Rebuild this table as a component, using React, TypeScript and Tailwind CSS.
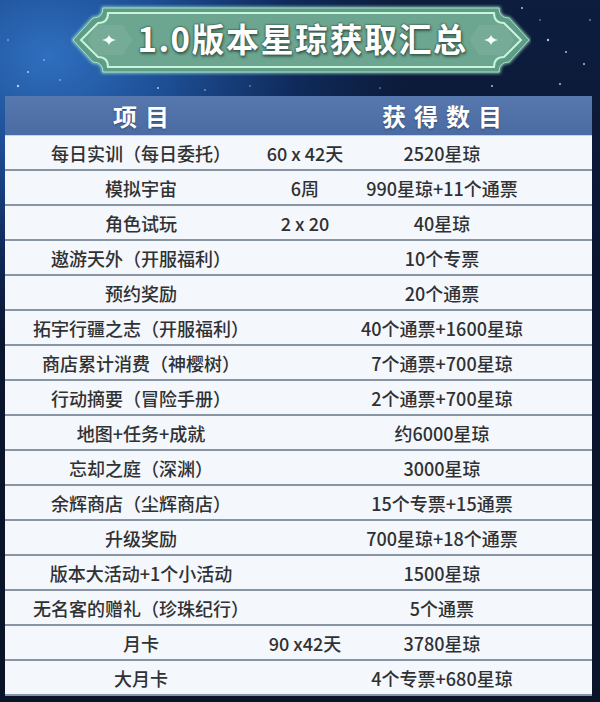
import { FC } from "react";

const rows: [string, string, string][] = [
  ["每日实训（每日委托）", "60 x 42天", "2520星琼"],
  ["模拟宇宙", "6周", "990星琼+11个通票"],
  ["角色试玩", "2 x 20", "40星琼"],
  ["遨游天外（开服福利）", "", "10个专票"],
  ["预约奖励", "", "20个通票"],
  ["拓宇行疆之志（开服福利）", "", "40个通票+1600星琼"],
  ["商店累计消费（神樱树）", "", "7个通票+700星琼"],
  ["行动摘要（冒险手册）", "", "2个通票+700星琼"],
  ["地图+任务+成就", "", "约6000星琼"],
  ["忘却之庭（深渊）", "", "3000星琼"],
  ["余辉商店（尘辉商店）", "", "15个专票+15通票"],
  ["升级奖励", "", "700星琼+18个通票"],
  ["版本大活动+1个小活动", "", "1500星琼"],
  ["无名客的赠礼（珍珠纪行）", "", "5个通票"],
  ["月卡", "90 x42天", "3780星琼"],
  ["大月卡", "", "4个专票+680星琼"],
];

const font = "font-['Noto_Sans_CJK_SC','Noto_Sans',sans-serif]";

const Sparkle: FC<{ x: number; y: number }> = ({ x, y }) => (
  <path
    transform={`translate(${x} ${y})`}
    d="M0,-5 Q1.2,-1.2 7,0 Q1.2,1.2 0,5 Q-1.2,1.2 -7,0 Q-1.2,-1.2 0,-5 Z"
    fill="#f4fff9"
  />
);

const Banner: FC = () => (
  <div className="relative h-[72px] w-[460px]">
    <svg className="absolute inset-0" width="460" height="72" viewBox="0 0 460 72">
      <defs>
        <filter id="glow" x="-10%" y="-30%" width="120%" height="160%">
          <feGaussianBlur stdDeviation="1.5" />
        </filter>
      </defs>
      <path
        d="M32,4 H428 Q428,14 438,14 L458,36 L438,58 Q428,58 428,68 H32 Q32,58 22,58 L2,36 L22,14 Q32,14 32,4 Z"
        fill="none"
        stroke="#9fe3c4"
        strokeWidth="3"
        filter="url(#glow)"
        opacity="0.8"
      />
      <path
        d="M32,4 H428 Q428,14 438,14 L458,36 L438,58 Q428,58 428,68 H32 Q32,58 22,58 L2,36 L22,14 Q32,14 32,4 Z"
        fill="#5f9c86"
        stroke="#a6e2c5"
        strokeWidth="1"
      />
      <path
        d="M37,9 H423 Q423,19 433,19 L450,36 L433,53 Q423,53 423,63 H37 Q37,53 27,53 L10,36 L27,19 Q37,19 37,9 Z"
        fill="#6ca690"
        stroke="#c9f4dc"
        strokeWidth="2"
      />
      <path d="M26,21 L52,21 L61,36 L52,51 L26,51 L17,36 Z" fill="#ffffff" opacity="0.07" />
      <path d="M408,21 L434,21 L443,36 L434,51 L408,51 L399,36 Z" fill="#ffffff" opacity="0.07" />
      <Sparkle x={38} y={36} />
      <Sparkle x={420} y={36} />
    </svg>
    <div className="relative flex h-full items-center justify-center pb-[3px] pl-[4px]">
      <span
        className={`${font} text-[33px] font-bold leading-none tracking-[1.5px] text-white [text-shadow:0_0_2px_#35574b,0_0_2px_#35574b,1px_2px_3px_rgba(0,0,0,0.45)]`}
      >
        1.0版本星琼获取汇总
      </span>
    </div>
  </div>
);

const stars: [number, number, number][] = [
  [522, 8, 1], [548, 40, 1.2], [566, 52, 1], [584, 64, 1], [468, 62, 0.8], [560, 84, 1],
  [590, 20, 0.8], [28, 72, 1], [18, 86, 1.2], [44, 60, 0.8], [158, 88, 1], [205, 90, 0.8],
  [492, 86, 1], [8, 40, 0.8], [60, 80, 0.8], [250, 86, 0.7], [380, 88, 0.7], [540, 20, 0.7],
];

export default function App() {
  return (
    <div
      className={`relative h-[702px] w-[600px] overflow-hidden bg-[radial-gradient(ellipse_60%_40%_at_8%_8%,#2f6fbf_0%,#1d4d93_35%,#0f2a5a_70%,transparent_100%),linear-gradient(180deg,#0d1d3e_0%,#0a1630_40%,#0a1428_100%)] ${font}`}
    >
      <svg className="pointer-events-none absolute inset-0" width="600" height="702">
        {stars.map(([x, y, r], i) => (
          <circle key={i} cx={x} cy={y} r={r} fill="#dfeaff" opacity="0.8" />
        ))}
      </svg>

      <div className="relative flex h-[96px] justify-center pt-[4px] pl-[1px]">
        <Banner />
      </div>

      <div className="relative ml-[5px] w-[587px]">
        <div className="grid h-[40px] grid-cols-[272px_56px_1fr] items-center border-b border-[#c9d4e2] bg-gradient-to-b from-[#5778ae] to-[#4a6ba3] text-[24px] font-bold text-white [text-shadow:0_1px_2px_rgba(0,0,0,0.35)]">
          <div className="flex justify-center pl-[8px] tracking-[8px]">项目</div>
          <div />
          <div className="flex justify-center pl-[8px] pr-[41px] tracking-[8px]">获得数目</div>
        </div>
        {rows.map(([item, calc, total]) => (
          <div
            key={item}
            className="grid h-[35px] grid-cols-[272px_56px_1fr] items-center border-b-2 border-[#8795a5] bg-[#f4f7fb] text-[18px] font-medium leading-none text-[#2f3133]"
          >
            <div className="flex justify-center whitespace-nowrap">{item}</div>
            <div className="flex justify-center whitespace-nowrap">{calc}</div>
            <div className="flex justify-center whitespace-nowrap pr-[41px]">{total}</div>
          </div>
        ))}
      </div>
    </div>
  );
}
